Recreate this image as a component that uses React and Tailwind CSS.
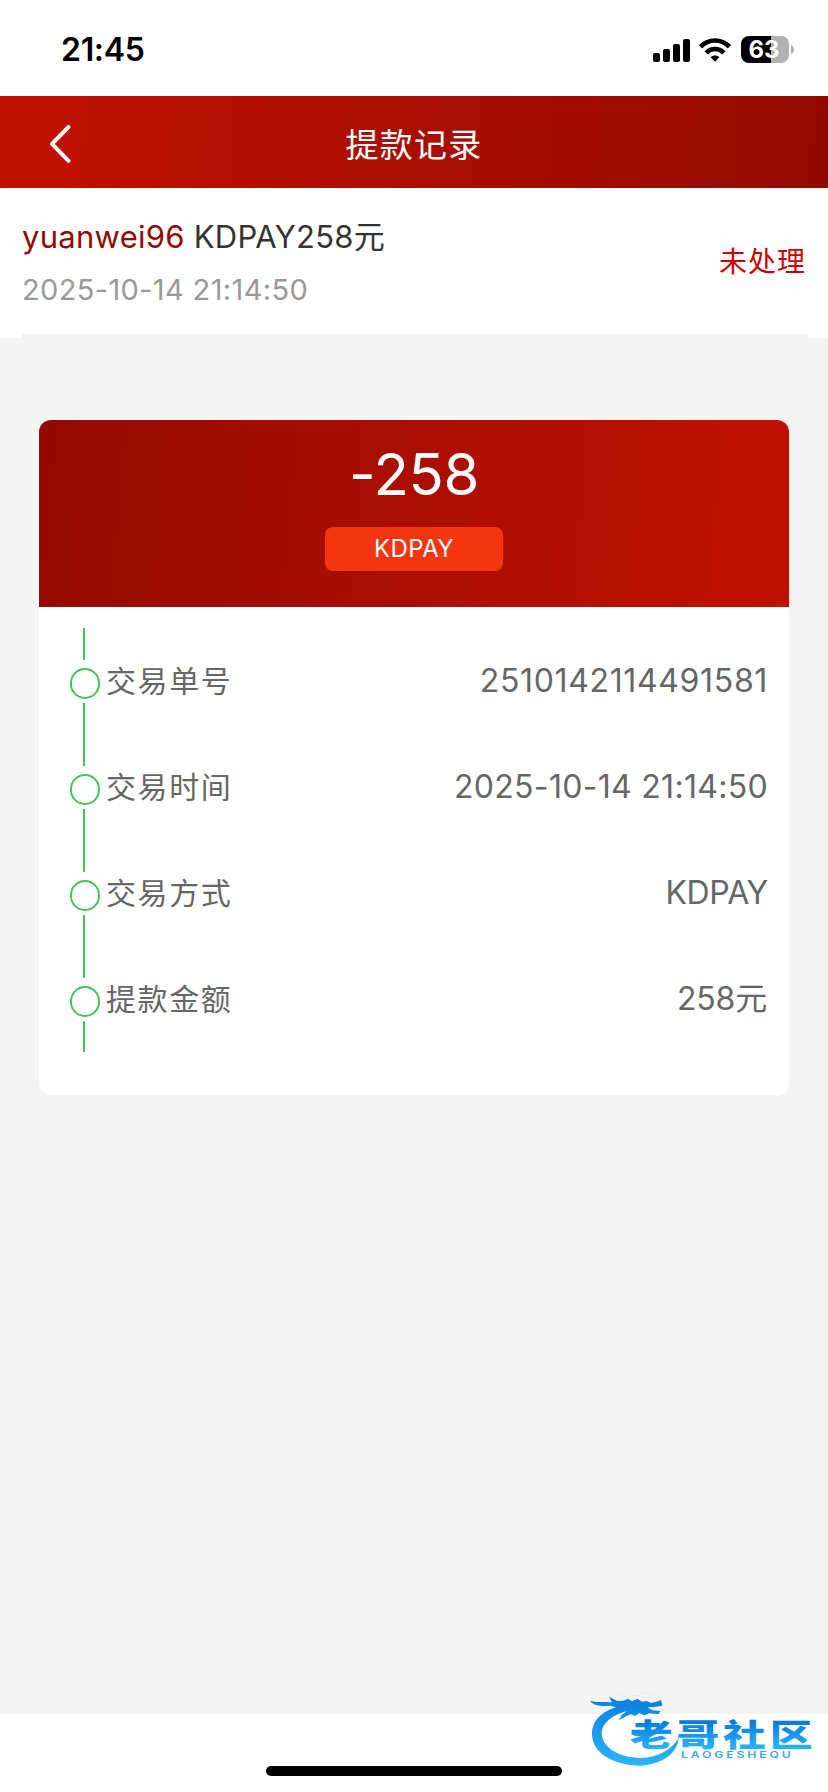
import { clsx } from "clsx"

const record = {
  user: "yuanwei96",
  title: "KDPAY258元",
  time: "2025-10-14 21:14:50",
  status: "未处理",
  amount: "-258",
  method: "KDPAY",
}

const details = [
  { label: "交易单号", value: "2510142114491581", tracking: "tracking-[0.65px] mr-[-1px]" },
  { label: "交易时间", value: "2025-10-14 21:14:50", tracking: "tracking-[0.3px] mr-[-1px]" },
  { label: "交易方式", value: "KDPAY", tracking: "tracking-[-0.3px] mr-[-1px]" },
  { label: "提款金额", value: "258元", tracking: "tracking-[-0.2px]" },
]

function SignalIcon() {
  return (
    <svg width="37" height="24" viewBox="0 0 37 24" fill="#000">
      <rect x="0" y="14" width="7" height="9" rx="2" />
      <rect x="10" y="10" width="7" height="13" rx="2" />
      <rect x="20" y="5" width="7" height="18" rx="2" />
      <rect x="30" y="0" width="7" height="23" rx="2" />
    </svg>
  )
}

function WifiIcon() {
  return (
    <svg width="32" height="24" viewBox="0 0 32 24" fill="none" stroke="#000" strokeWidth="4.6">
      <path d="M1.5 8.8 C9.5 0.4 22.5 0.4 30.5 8.8" />
      <path d="M7.2 14.8 C12 9.8 20 9.8 24.8 14.8" />
      <path d="M11.6 19.2 C14 16.8 18 16.8 20.4 19.2 L16 23.8 Z" fill="#000" stroke="none" />
    </svg>
  )
}

function Battery() {
  return (
    <div className="flex items-center gap-[2px]">
      <div className="flex h-[27px] w-12 items-center justify-center rounded-[8px] bg-[linear-gradient(90deg,#000_62.5%,#b1b1b1_62.5%)]">
        <span className="pr-[2px] text-[24px] leading-[27px] font-bold text-white">63</span>
      </div>
      <svg width="3" height="9" viewBox="0 0 3 9" fill="#b1b1b1">
        <path d="M0 0 C4 1.5 4 7.5 0 9 Z" />
      </svg>
    </div>
  )
}

function StatusBar() {
  return (
    <div className="flex h-24 items-start justify-between bg-white pr-[34px] pl-[61px]">
      <span className="mt-[30px] text-[32px] leading-[40px] font-semibold tracking-[-0.3px] text-black">21:45</span>
      <div className="mt-[36px] flex items-center">
        <div className="mt-[2px]">
          <SignalIcon />
        </div>
        <div className="ml-[9px]">
          <WifiIcon />
        </div>
        <div className="ml-[10px]">
          <Battery />
        </div>
      </div>
    </div>
  )
}

function NavBar() {
  return (
    <div className="grid h-[92px] grid-cols-[1fr_auto_1fr] items-center bg-[linear-gradient(95deg,#c11204_0%,#aa0e01_50%,#940a00_100%)]">
      <svg className="mt-[4px] ml-[48px]" width="24" height="40" viewBox="0 0 24 40" fill="none" stroke="#fff" strokeWidth="4" strokeLinecap="round" strokeLinejoin="round">
        <path d="M20.5 3 L4 19.8 L20.5 36.8" />
      </svg>
      <h1 className="pt-[6px] text-[33px] leading-[46px] tracking-[1.3px] text-white">提款记录</h1>
    </div>
  )
}

function RecordSummary() {
  return (
    <div className="h-[150px] bg-white px-[22px]">
      <div className="flex h-[146px] items-center justify-between">
        <div className="pt-[5px]">
          <p className="text-[31px] leading-[52px] tracking-[0.27px] whitespace-pre text-[#333]">
            <span className="text-[#930a00]">{record.user}</span> {record.title}
          </p>
          <p className="text-[29px] leading-[54px] tracking-[0.35px] text-[#999]">{record.time}</p>
        </div>
        <span className="pt-[2px] text-[28px] leading-[40px] tracking-[1px] text-[#cc0000]">{record.status}</span>
      </div>
      <div className="mr-[-1px] h-1 bg-[#f4f4f4]" />
    </div>
  )
}

function DetailRow({ item }) {
  return (
    <div className="flex h-[106px] items-center">
      {/* timeline marker */}
      <div className="flex h-full w-[30px] flex-col items-center">
        <div className="mr-[2px] h-8 w-[2px] bg-[#45c35a]" />
        <div className="my-2 mb-1 h-[31px] w-[30px] rounded-full border-2 border-[#45c35a]" />
        <div className="mr-[2px] h-[31px] w-[2px] bg-[#45c35a]" />
      </div>
      <span className="ml-[6px] text-[30px] leading-[44px] tracking-[1.6px]">{item.label}</span>
      <span className={clsx("ml-auto text-[32px] leading-[44px]", item.tracking)}>{item.value}</span>
    </div>
  )
}

function DetailCard() {
  return (
    <div className="mx-[39px] mt-[82px] h-[675px] overflow-hidden rounded-[12px] bg-white">
      <div className="flex h-[187px] flex-col items-center bg-[linear-gradient(95deg,#940a00_0%,#aa0e01_50%,#c11204_100%)] text-white">
        <span className="mt-[18px] text-[58px] leading-[72px] tracking-[-0.3px]">{record.amount}</span>
        <span className="mt-[17px] h-11 w-[178px] rounded-[8px] bg-[#f23610] text-center text-[24px] leading-[43px] tracking-[0.4px]">
          {record.method}
        </span>
      </div>
      <div className="pt-[21px] pr-[22px] pl-[31px] text-[#666]">
        {details.map((item) => (
          <DetailRow key={item.label} item={item} />
        ))}
      </div>
    </div>
  )
}

function CommunityLogo() {
  return (
    <svg className="absolute right-4 bottom-[25px] overflow-visible" width="224" height="77" viewBox="84 60 672 231">
      <defs>
        <linearGradient id="ring" gradientUnits="userSpaceOnUse" x1="0" y1="85" x2="0" y2="285">
          <stop offset="0" stopColor="#0a7fe2" />
          <stop offset="1" stopColor="#2cb4fb" />
        </linearGradient>
        <linearGradient id="word" x1="0" y1="0" x2="0" y2="1">
          <stop offset="0.25" stopColor="#0579df" />
          <stop offset="0.85" stopColor="#2ab3fc" />
        </linearGradient>
      </defs>
      {/* antlers */}
      <path d="M172 70 C185 82 205 78 225 86 M235 66 C262 70 290 70 302 88 M215 76 C240 76 262 82 282 92" fill="none" stroke="#e6eef2" strokeWidth="3" />
      {/* body */}
      <path d="M190 106 C130 118 94 150 96 196 C99 250 160 286 240 287 C305 283 352 252 356 203 C338 236 298 262 240 264 C178 262 127 235 125 190 C125 160 155 134 205 122 Z" fill="url(#ring)" />
      {/* head and whiskers */}
      <path d="M90 92 C108 98 130 94 156 97 L147 80 L172 93 L190 92 L204 86 L216 94 L232 86 L246 95 L260 93 L274 99 L294 94 L303 90 L307 107 L284 111 L262 112 L278 121 L301 123 L296 133 L268 130 L252 136 L238 129 L226 138 L212 133 L196 140 L176 151 L186 134 L200 124 L180 114 L150 107 C120 110 98 105 90 92 Z" fill="url(#ring)" />
      <path d="M212 193 C235 205 260 196 282 180 L250 180 C240 188 225 190 212 193 Z" fill="url(#ring)" />
      <g transform="translate(209 227) scale(1.38 1)">
        <text x="0" y="0" fontSize="93" fontWeight="900" letterSpacing="8.6" fill="url(#word)" fontFamily="'Noto Sans CJK SC', sans-serif">老哥社区</text>
      </g>
      <g transform="translate(363 264) scale(1.35 1)">
        <text x="0" y="0" fontSize="27" fontWeight="600" textLength="244" lengthAdjust="spacing" fill="#3fa5ef" fontFamily="Inter, sans-serif">LAOGESHEQU</text>
      </g>
    </svg>
  )
}

export default function App() {
  return (
    <div className="relative flex h-[1792px] w-[828px] flex-col bg-[#f4f4f4] font-['Inter','Noto_Sans_CJK_SC',sans-serif]">
      <StatusBar />
      <NavBar />
      <RecordSummary />
      <DetailCard />
      {/* home indicator */}
      <div className="mt-auto flex h-[78px] items-end justify-center bg-white pb-4">
        <div className="h-[10px] w-[296px] rounded-full bg-black" />
      </div>
      <CommunityLogo />
    </div>
  )
}
